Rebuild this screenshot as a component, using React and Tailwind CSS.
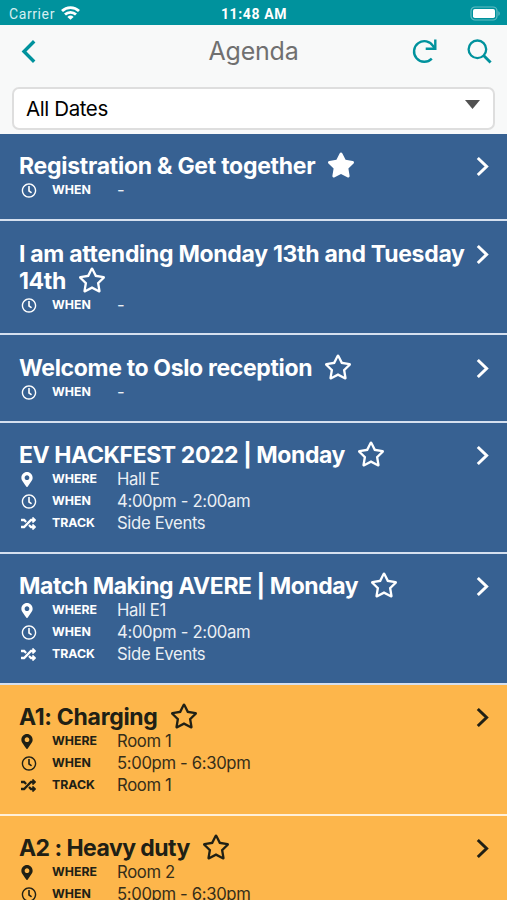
import { FaMapMarkerAlt, FaRandom, FaRegClock, FaRegStar, FaStar } from "react-icons/fa";
import { clsx } from "clsx";

// Agenda entries in display order
const sessions = [
  {
    id: 1,
    title: "Registration & Get together",
    starred: true,
    when: "-",
    tracking: "tracking-[-0.27px]",
    spacing: "pt-[19px] pb-[18px]",
  },
  {
    id: 2,
    title: "I am attending Monday 13th and Tuesday 14th",
    when: "-",
    tracking: "tracking-[-0.3px]",
    spacing: "pt-[20px] pb-[17px]",
  },
  {
    id: 3,
    title: "Welcome to Oslo reception",
    when: "-",
    tracking: "tracking-[-0.35px]",
    spacing: "pt-[20px] pb-[18px]",
  },
  {
    id: 4,
    title: "EV HACKFEST 2022 | Monday",
    where: "Hall E",
    when: "4:00pm - 2:00am",
    track: "Side Events",
    tracking: "tracking-[-0.42px]",
    spacing: "pt-[19px] pb-[18px]",
  },
  {
    id: 5,
    title: "Match Making AVERE | Monday",
    where: "Hall E1",
    when: "4:00pm - 2:00am",
    track: "Side Events",
    tracking: "tracking-[-0.44px]",
    spacing: "pt-[19px] pb-[18px]",
  },
  {
    id: 6,
    title: "A1: Charging",
    where: "Room 1",
    when: "5:00pm - 6:30pm",
    track: "Room 1",
    tracking: "tracking-[-0.3px]",
    spacing: "pt-[19px] pb-[18px]",
    orange: true,
  },
  {
    id: 7,
    title: "A2 : Heavy duty",
    where: "Room 2",
    when: "5:00pm - 6:30pm",
    track: "Room 2",
    tracking: "tracking-[-0.55px]",
    spacing: "pt-[19px] pb-[18px]",
    orange: true,
  },
];

// iOS status bar
function StatusBar() {
  return (
    <div className="grid h-[25px] grid-cols-3 items-center bg-[#00929d] pt-[3px] pr-[6px] pl-[9px] text-white">
      <div className="flex items-center gap-[6px]">
        <span className="font-[Roboto,sans-serif] text-[14px] leading-none tracking-[0.6px] text-[#d5eff1]">Carrier</span>
        <svg className="-mt-[2px] h-[14px] w-[19px]" viewBox="0 0 19 14" fill="none" stroke="currentColor" strokeWidth="2.8">
          <path d="M1 5.1a12.2 12.2 0 0 1 17 0M4 8.6a7.9 7.9 0 0 1 11 0" />
          <path d="M9.5 13.8 6.4 10.9a4.5 4.5 0 0 1 6.2 0Z" fill="currentColor" stroke="none" />
        </svg>
      </div>
      <span className="-ml-[2px] text-center font-[Roboto,sans-serif] text-[14px] leading-none font-bold tracking-[0.6px] whitespace-nowrap">
        11:48 AM
      </span>
      <svg className="-mt-[2px] h-[15px] w-[31px] justify-self-end" viewBox="0 0 31 15" fill="none">
        <rect x="1" y="1" width="26" height="13" rx="4" stroke="#62bdc4" strokeWidth="1.2" />
        <rect x="3" y="3" width="22" height="9" rx="1.8" fill="#fff" />
        <path d="M28.4 5.2c1.8.6 1.8 4 0 4.6Z" fill="#62bdc4" />
      </svg>
    </div>
  );
}

// Title bar with back, reload and search
function Header() {
  return (
    <header className="flex h-[61px] items-start justify-between pt-[13px] pr-[15px] pl-[20px] text-[#00929d]">
      <button aria-label="Back" className="flex w-[75px] pt-[1px]">
        <svg className="h-[25px] w-[17px]" viewBox="0 0 17 25" fill="none" stroke="currentColor" strokeWidth="3.4">
          <path d="M14.2 2.2 4 12.5 14.2 22.8" />
        </svg>
      </button>
      <h1 className="text-[25px] leading-[26px] tracking-[-0.2px] text-[#707070]">Agenda</h1>
      <div className="flex w-[80px] justify-between">
        <button aria-label="Reload">
          <svg className="h-[26px] w-[25px]" viewBox="0 0 25 26" fill="none" stroke="currentColor" strokeWidth="2.4">
            <path d="M19.8 20.6A10.3 10.3 0 1 1 21.2 8.2l1.6 2" />
            <path d="M23.3 1.6v9.2h-9.6" />
          </svg>
        </button>
        <button aria-label="Search">
          <svg className="h-[26px] w-[26px]" viewBox="0 0 26 26" fill="none" stroke="currentColor" strokeWidth="2.3">
            <circle cx="11.4" cy="11.3" r="8.8" />
            <path d="m17.6 17.5 7 7" strokeWidth="2.9" />
          </svg>
        </button>
      </div>
    </header>
  );
}

function DateFilter() {
  return (
    <div className="h-[48px] px-3 pt-[1px]">
      <button className="flex h-[43px] w-full items-center justify-between rounded-[7px] border-2 border-[#dedede] bg-white pr-[13px] pl-[12px] text-black">
        <span className="pt-[1px] text-[20.5px] leading-none tracking-[-0.4px]">All Dates</span>
        <svg className="-mt-[8px] h-[9px] w-[15px]" viewBox="0 0 15 9" fill="#515151">
          <path d="M0 0h15L7.5 9Z" />
        </svg>
      </button>
    </div>
  );
}

// One icon + label + value line
function Detail({ icon: Icon, iconClass, label, value }) {
  return (
    <div className="flex h-[22px] items-center">
      <span className="flex w-[33px]">
        <Icon className={iconClass} />
      </span>
      <span className="w-[65px] pt-px text-[12.3px] leading-none font-bold">{label}</span>
      <span className="text-[16.7px] leading-none tracking-[-0.35px] opacity-90">{value}</span>
    </div>
  );
}

function SessionRow({ session }) {
  const Star = session.starred ? FaStar : FaRegStar;

  return (
    <li
      className={clsx(
        "flex shrink-0 items-start justify-between border-b-2 pr-[17px] pl-[19px]",
        session.spacing,
        session.orange ? "border-[#fff0d9] bg-[#fdb64b] text-[#202015]" : "border-[#d5e0ef] bg-[#376192] text-white"
      )}
    >
      <div className="w-[452px]">
        <h2 className={clsx("text-[23px] leading-[27px] font-bold", session.tracking)}>
          {session.title}
          <Star className="-mt-[5px] ml-[12px] inline h-[26px] w-[28px]" />
        </h2>
        <div className="-mt-px">
          {session.where && (
            <Detail icon={FaMapMarkerAlt} iconClass="ml-[2px] h-[15px] w-[12px]" label="WHERE" value={session.where} />
          )}
          <Detail icon={FaRegClock} iconClass="ml-[2px] h-[15px] w-[16px]" label="WHEN" value={session.when} />
          {session.track && (
            <Detail icon={FaRandom} iconClass="ml-[2px] h-[15px] w-[15px]" label="TRACK" value={session.track} />
          )}
        </div>
      </div>
      <svg className="mt-[3px] h-[21px] w-[14px] shrink-0" viewBox="0 0 14 21" fill="none" stroke="currentColor" strokeWidth="3">
        <path d="m1.8 2 8.8 8.5L1.8 19" />
      </svg>
    </li>
  );
}

export default function App() {
  return (
    <div className="flex h-[900px] w-[507px] flex-col overflow-hidden bg-[#f8f9f9] font-[Inter,sans-serif]">
      <StatusBar />
      <Header />
      <DateFilter />
      <ul className="flex min-h-0 flex-1 flex-col overflow-hidden">
        {sessions.map((session) => (
          <SessionRow key={session.id} session={session} />
        ))}
      </ul>
    </div>
  );
}
